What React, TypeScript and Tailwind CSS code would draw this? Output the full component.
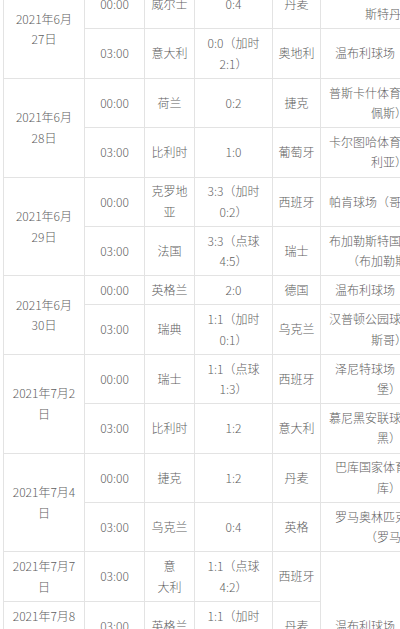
type Match = {
    time: string
    home: React.ReactNode
    score: string
    away: string
    venue?: string
    venueSpan?: number
}

type DayGroup = {
    date: string
    matches: Match[]
}

const days: DayGroup[] = [
    {
        date: "2021年6月27日",
        matches: [
            { time: "00:00", home: "威尔士", score: "0:4", away: "丹麦", venue: "克鲁伊夫竞技场（阿姆斯特丹）" },
            { time: "03:00", home: "意大利", score: "0:0（加时2:1）", away: "奥地利", venue: "温布利球场（伦敦）" },
        ],
    },
    {
        date: "2021年6月28日",
        matches: [
            { time: "00:00", home: "荷兰", score: "0:2", away: "捷克", venue: "普斯卡什体育场（布达佩斯）" },
            { time: "03:00", home: "比利时", score: "1:0", away: "葡萄牙", venue: "卡尔图哈体育场（塞维利亚）" },
        ],
    },
    {
        date: "2021年6月29日",
        matches: [
            { time: "00:00", home: "克罗地亚", score: "3:3（加时0:2）", away: "西班牙", venue: "帕肯球场（哥本哈根）" },
            { time: "03:00", home: "法国", score: "3:3（点球4:5）", away: "瑞士", venue: "布加勒斯特国家竞技场（布加勒斯特）" },
        ],
    },
    {
        date: "2021年6月30日",
        matches: [
            { time: "00:00", home: "英格兰", score: "2:0", away: "德国", venue: "温布利球场（伦敦）" },
            { time: "03:00", home: "瑞典", score: "1:1（加时0:1）", away: "乌克兰", venue: "汉普顿公园球场（格拉斯哥）" },
        ],
    },
    {
        date: "2021年7月2日",
        matches: [
            { time: "00:00", home: "瑞士", score: "1:1（点球1:3）", away: "西班牙", venue: "泽尼特球场（圣彼得堡）" },
            { time: "03:00", home: "比利时", score: "1:2", away: "意大利", venue: "慕尼黑安联球场（慕尼黑）" },
        ],
    },
    {
        date: "2021年7月4日",
        matches: [
            { time: "00:00", home: "捷克", score: "1:2", away: "丹麦", venue: "巴库国家体育场（巴库）" },
            { time: "03:00", home: "乌克兰", score: "0:4", away: "英格", venue: "罗马奥林匹克体育场（罗马）" },
        ],
    },
    {
        date: "2021年7月7日",
        matches: [
            {
                time: "03:00",
                home: (
                    <>
                        意<br />大利
                    </>
                ),
                score: "1:1（点球4:2）",
                away: "西班牙",
                venue: "温布利球场（伦敦）",
                venueSpan: 3,
            },
        ],
    },
    {
        date: "2021年7月8日",
        matches: [{ time: "03:00", home: "英格兰", score: "1:1（加时2:1）", away: "丹麦" }],
    },
    {
        date: "2021年7月12日",
        matches: [{ time: "03:00", home: "意大利", score: "1:1（点球3:2）", away: "英格兰" }],
    },
]

const cell = "border border-[#e3e3e3] py-[3.8px] text-center align-middle"

const App = () => {
    return (
        <div className="h-[629px] w-[400px] overflow-hidden bg-white">
            <table className="-mt-[21px] ml-[3px] w-[454px] table-fixed border-collapse font-['Noto_Sans_CJK_SC',sans-serif] text-[12px] font-light leading-[20.4px] text-[#606060]">
                <colgroup>
                    <col className="w-[81px]" />
                    <col className="w-[60px]" />
                    <col className="w-[50px]" />
                    <col className="w-[78px]" />
                    <col className="w-[48px]" />
                    <col className="w-[137px]" />
                </colgroup>
                <tbody>
                    {days.map((day) =>
                        day.matches.map((match, i) => (
                            <tr key={day.date + match.time}>
                                {i === 0 && (
                                    <td rowSpan={day.matches.length} className={`${cell} px-[6px]`}>
                                        {day.date}
                                    </td>
                                )}
                                <td className={`${cell} px-[5px]`}>{match.time}</td>
                                <td className={`${cell} px-[6px]`}>{match.home}</td>
                                <td className={`${cell} px-[6px]`}>{match.score}</td>
                                <td className={`${cell} px-[5px]`}>{match.away}</td>
                                {match.venue && (
                                    <td rowSpan={match.venueSpan ?? 1} className={`${cell} px-[6px]`}>
                                        {match.venue}
                                    </td>
                                )}
                            </tr>
                        ))
                    )}
                </tbody>
            </table>
        </div>
    )
}

export default App
